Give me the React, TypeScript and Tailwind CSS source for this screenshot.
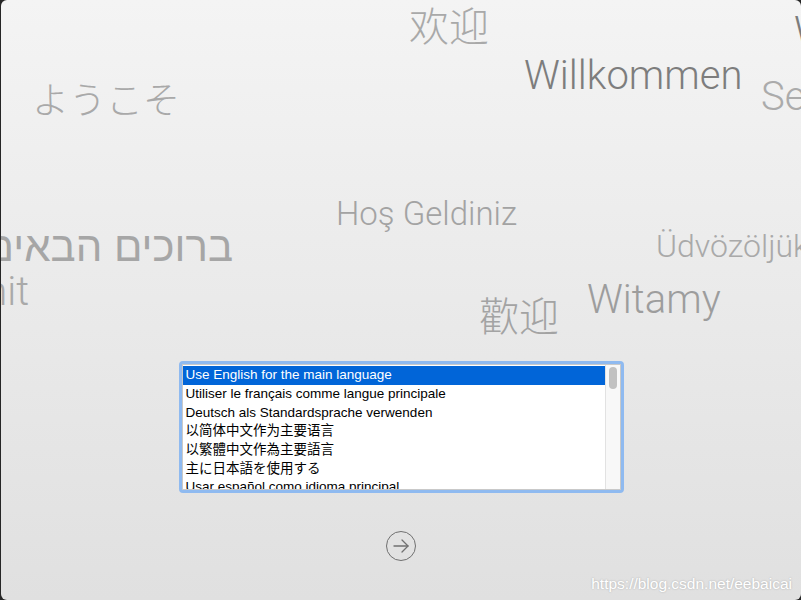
import React from "react";

type Word = { text: string; cls: string };

const words: Word[] = [
  { text: "欢迎", cls: "left-[408px] top-[4px] text-[40px] text-[#a9a9a9] font-cjk" },
  { text: "Welcome", cls: "left-[793px] top-[12px] text-[40px] text-[#7c7c7c]" },
  { text: "Willkommen", cls: "left-[523px] top-[56px] text-[40px] text-[#7d7d7d]" },
  { text: "ようこそ", cls: "left-[31px] top-[80px] text-[37px] text-[#a9a9a9] font-cjk" },
  { text: "Selamat Datang", cls: "left-[760px] top-[77px] text-[40px] text-[#ababab]" },
  { text: "Hoş Geldiniz", cls: "left-[335px] top-[197px] text-[33px] text-[#a3a3a3]" },
  { text: "Üdvözöljük", cls: "left-[655px] top-[230px] text-[32px] text-[#a9a9a9]" },
  { text: "Witamy", cls: "left-[586px] top-[280px] text-[40px] text-[#9d9d9d]" },
  { text: "歡迎", cls: "left-[478px] top-[294px] text-[40px] text-[#a3a3a3] font-cjk" },
];

const languages = [
  "Use English for the main language",
  "Utiliser le français comme langue principale",
  "Deutsch als Standardsprache verwenden",
  "以简体中文作为主要语言",
  "以繁體中文作為主要語言",
  "主に日本語を使用する",
  "Usar español como idioma principal",
];

export default function App() {
  return (
    <div className="h-[600px] w-[801px] bg-[#262626] pl-px overflow-hidden">
      <div
        className="relative h-full w-full overflow-hidden rounded-[6px] bg-gradient-to-b from-[#f4f4f4] to-[#e0e0e0]"
        style={{ fontFamily: "Roboto, 'Liberation Sans', 'Noto Sans CJK SC', sans-serif" }}
      >
        {words.map((w) => (
          <div
            key={w.text}
            className={`absolute whitespace-nowrap font-light leading-none ${w.cls}`}
            style={
              w.cls.includes("font-cjk")
                ? { fontFamily: "'Noto Sans CJK SC', 'Noto Sans CJK JP', sans-serif" }
                : undefined
            }
          >
            {w.text}
          </div>
        ))}

        {/* hebrew + romanian, clipped by the left edge */}
        <div
          dir="rtl"
          className="absolute right-[568px] top-[226px] whitespace-nowrap text-[42px] leading-none text-[#a6a6a6]"
          style={{ fontFamily: "'Liberation Sans', 'DejaVu Sans', sans-serif" }}
        >
          ברוכים הבאים
        </div>
        <div className="absolute right-[772px] top-[272px] whitespace-nowrap text-[40px] font-light leading-none text-[#a9a9a9]">
          Bine ați venit
        </div>

        <div className="flex flex-col items-center pt-[361px]">
          <div className="h-[132px] w-[445px] rounded-[4px] border-[3px] border-[#8fbaf0] bg-white">
            <div className="flex h-full border border-[#c9c9c9]">
              <div
                className="flex-1 overflow-hidden pt-px text-[13.5px] text-black"
                style={{ fontFamily: "'Liberation Sans', 'Noto Sans CJK SC', 'Noto Sans CJK JP', sans-serif" }}
              >
                {languages.map((l, i) => (
                  <div
                    key={l}
                    className={`flex h-[18.7px] items-center whitespace-nowrap pl-[3px] ${
                      i === 0 ? "bg-[#0165d8] text-white" : ""
                    }`}
                  >
                    {l}
                  </div>
                ))}
              </div>
              <div className="w-[15px] border-l border-[#e2e2e2] bg-[#f8f8f8] pt-[2px]">
                <div className="mx-auto h-[22px] w-[8px] rounded-full bg-[#c1c1c1]" />
              </div>
            </div>
          </div>

          <button className="mt-[38px] flex h-[30px] w-[30px] items-center justify-center rounded-full border border-[#707070]">
            <svg width="18" height="18" viewBox="0 0 18 18" fill="none" stroke="#707070" strokeWidth="1.3" strokeLinecap="round" strokeLinejoin="round">
              <path d="M2 9h14" />
              <path d="M10 3l6 6-6 6" />
            </svg>
          </button>
        </div>

        <div
          className="absolute bottom-[9px] right-[9px] whitespace-nowrap text-[15.5px] leading-none text-white [text-shadow:0_0_2px_rgba(0,0,0,0.25)]"
          style={{ fontFamily: "'Liberation Sans', sans-serif" }}
        >
          https://blog.csdn.net/eebaicai
        </div>
      </div>
    </div>
  );
}
